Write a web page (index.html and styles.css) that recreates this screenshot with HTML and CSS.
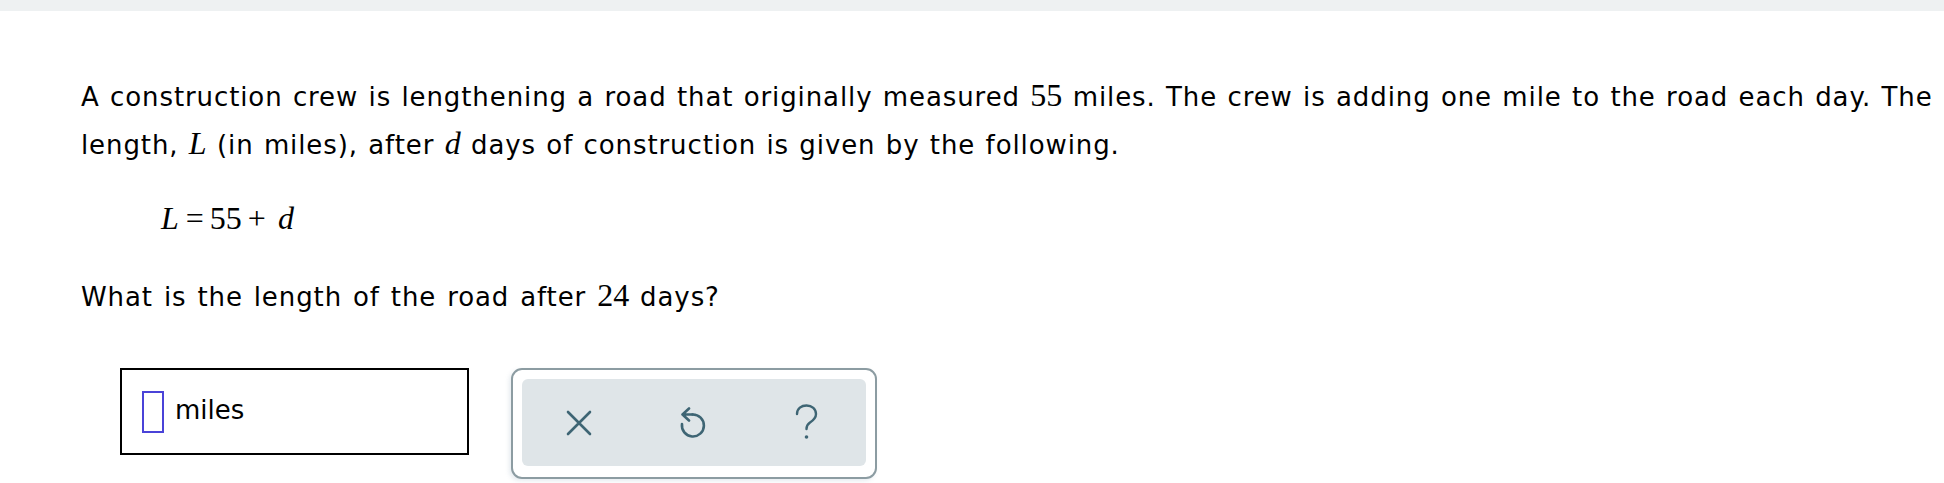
FILE: index.html
```html
<!DOCTYPE html>
<html>
<head>
<meta charset="utf-8">
<link rel="stylesheet" href="styles.css">
</head>
<body>
<div class="topbar"></div>
<div class="content">
  <p class="para">A construction crew is lengthening a road that originally measured <span class="num">55</span> miles. The crew is adding one mile to the road each day. The<br>length, <span class="var">L</span> (in miles), after <span class="var">d</span> days of construction is given by the following.</p>
  <div class="equation"><span class="var">L</span><span class="op eq">=</span><span class="num">55</span><span class="op plus">+</span><span class="var">d</span></div>
  <p class="question">What is the length of the road after <span class="num">24</span> days?</p>
  <div class="answer-row">
    <div class="answer-box">
      <span class="slot"></span>
      <span class="unit">miles</span>
    </div>
    <div class="tools">
      <div class="tools-inner">
        <button class="tool" aria-label="Clear">
          <svg width="28" height="28" viewBox="0 0 28 28"><path d="M3 3 L25 25 M25 3 L3 25" stroke="#3e6574" stroke-width="2.6" stroke-linecap="round" fill="none"/></svg>
        </button>
        <button class="tool" aria-label="Undo">
          <svg width="32" height="32" viewBox="0 0 32 32"><path d="M15.5 7.5 A 11 11 0 1 1 5 17" stroke="#3e6574" stroke-width="2.6" stroke-linecap="round" fill="none"/><path d="M12 1.5 L5.5 7.5 L12 13.5 M5.5 7.5 H15.5" stroke="#3e6574" stroke-width="2.6" stroke-linecap="round" stroke-linejoin="round" fill="none"/></svg>
        </button>
        <button class="tool" aria-label="Help">
          <svg width="26" height="38" viewBox="0 0 26 38"><path d="M3 10 C3 4.5 7.5 1.5 12.5 1.5 C18 1.5 22 5 22 10 C22 14.5 19 16.5 16 18.5 C13.5 20.2 12.5 21.8 12.5 25" stroke="#3e6574" stroke-width="2.4" stroke-linecap="round" fill="none"/><circle cx="12.5" cy="33" r="1.8" fill="#3e6574"/></svg>
        </button>
      </div>
    </div>
  </div>
</div>
</body>
</html>
```
FILE: styles.css
```css
html, body {
  margin: 0;
  padding: 0;
  background: #ffffff;
}
body {
  font-family: "DejaVu Sans", Verdana, sans-serif;
  color: #000;
  width: 1944px;
  height: 483px;
  overflow: hidden;
}
.topbar {
  height: 11px;
  background: #eef1f2;
}
.content {
  padding-left: 81px;
}
.para {
  margin: 62px 0 0 0;
  font-size: 26px;
  letter-spacing: 0.9px;
  word-spacing: 1.2px;
  line-height: 48px;
  width: 1863px;
  white-space: nowrap;
}
.num {
  font-family: "Liberation Serif", "Times New Roman", serif;
  font-size: 32px;
  line-height: 1;
  letter-spacing: 0;
}
.var {
  font-family: "Liberation Serif", "Times New Roman", serif;
  font-style: italic;
  font-size: 32px;
  line-height: 1;
  letter-spacing: 0;
}
.equation {
  margin: 19px 0 0 80px;
  height: 60px;
  line-height: 60px;
  font-family: "Liberation Serif", "Times New Roman", serif;
  font-size: 32px;
}
.equation .eq {
  margin: 0 6px 0 7px;
}
.equation .plus {
  margin: 0 12px 0 6px;
}
.question {
  margin: 25px 0 0 0;
  font-size: 26px;
  letter-spacing: 0.9px;
  word-spacing: 1.8px;
  line-height: 48px;
}
.answer-row {
  display: flex;
  align-items: flex-start;
  gap: 42px;
  margin-top: 47px;
  margin-left: 39px;
}
.answer-box {
  box-sizing: border-box;
  width: 349px;
  height: 87px;
  border: 2px solid #000;
  display: flex;
  align-items: center;
  padding-left: 20px;
  gap: 11px;
}
.slot {
  box-sizing: border-box;
  width: 22px;
  height: 42px;
  border: 2px solid #4a43d8;
}
.unit {
  font-size: 26px;
  margin-top: -3px;
}
.tools {
  box-sizing: border-box;
  width: 366px;
  height: 111px;
  border: 2px solid #8c9ca2;
  border-radius: 11px;
  padding: 9px;
  box-shadow: -2px 2px 4px rgba(120, 150, 170, 0.18);
  background: #fff;
}
.tools-inner {
  height: 87px;
  background: #dfe5e8;
  border-radius: 6px;
  display: flex;
  align-items: center;
  gap: 74px;
  padding-left: 37px;
}
.tool {
  border: none;
  background: transparent;
  padding: 0;
  display: flex;
  align-items: center;
  justify-content: center;
  width: 40px;
  height: 44px;
}
```
